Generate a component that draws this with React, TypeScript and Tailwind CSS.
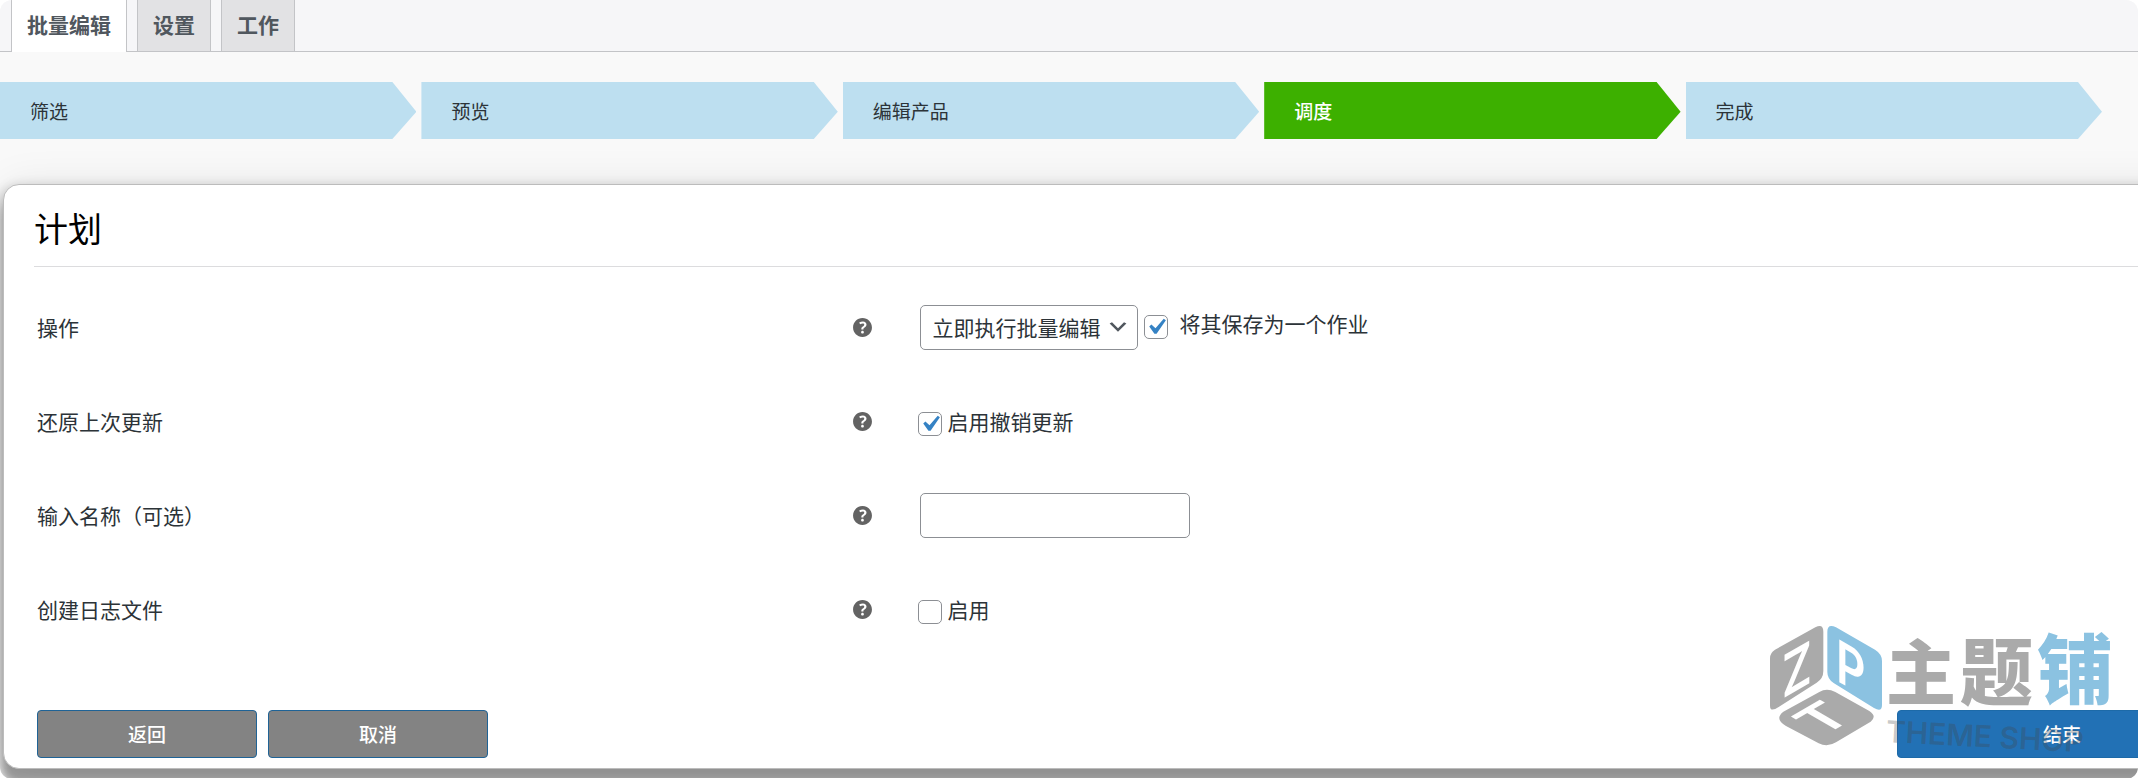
import { useId, useState } from "react";
import type { ReactNode } from "react";

const tabs = ["批量编辑", "设置", "工作"];
const steps = ["筛选", "预览", "编辑产品", "调度", "完成"];
const currentStep = 3;

function HelpIcon() {
  return (
    <svg viewBox="0 0 20 20" className="size-[27px] fill-[#636363]" aria-hidden="true">
      <path d="M17 10c0-3.87-3.14-7-7-7-3.87 0-7 3.13-7 7s3.13 7 7 7c3.86 0 7-3.13 7-7zm-6.3 1.48H9.14v-.43c0-.38.08-.7.24-.98s.46-.57.88-.89c.41-.29.68-.53.81-.71.14-.18.2-.39.2-.62 0-.25-.09-.44-.28-.58-.19-.13-.45-.19-.79-.19-.58 0-1.25.19-2 .57l-.64-1.28c.87-.49 1.8-.74 2.77-.74.81 0 1.45.2 1.92.58.48.39.71.91.71 1.55 0 .43-.09.8-.29 1.11-.19.32-.57.67-1.11 1.06-.38.28-.61.49-.71.63-.1.15-.15.34-.15.57v.35zm-1.47 2.74c-.18-.17-.27-.42-.27-.73 0-.33.08-.58.26-.75s.43-.25.77-.25c.32 0 .57.09.75.26s.27.42.27.74c0 .3-.09.55-.27.72-.18.18-.43.27-.75.27-.33 0-.58-.09-.76-.26z" />
    </svg>
  );
}

function Checkbox({ id, initial }: { id: string; initial: boolean }) {
  const [checked, setChecked] = useState(initial);
  return (
    <span className="grid size-6 shrink-0 place-items-center">
      <input
        id={id}
        type="checkbox"
        checked={checked}
        onChange={(e) => setChecked(e.target.checked)}
        className="size-6 appearance-none rounded-[5px] border border-[#8c8f94] bg-white [grid-area:1/1]"
      />
      {checked && (
        <svg viewBox="0 0 20 20" className="pointer-events-none -m-1 size-8 fill-[#3582c4] [grid-area:1/1]" aria-hidden="true">
          <path d="M14.83 4.89l1.34.94-5.81 8.38H9.02L5.78 9.67l1.34-1.25 2.57 2.4z" />
        </svg>
      )}
    </span>
  );
}

function CheckField({ id, initial, text }: { id: string; initial: boolean; text: string }) {
  return (
    <div className="flex items-center gap-1.5">
      <div className="pt-1.5">
        <Checkbox id={id} initial={initial} />
      </div>
      <label htmlFor={id}>{text}</label>
    </div>
  );
}

function Row({ label, htmlFor, children }: { label: string; htmlFor: string; children: ReactNode }) {
  return (
    <div className="grid h-[94px] grid-cols-[812fr_69px_1310fr] items-center">
      <label htmlFor={htmlFor}>{label}</label>
      <HelpIcon />
      <div className="flex items-center">{children}</div>
    </div>
  );
}

function Watermark() {
  return (
    <div className="pointer-events-none absolute right-[26px] bottom-[18px] flex w-[352px]" aria-hidden="true">
      <svg viewBox="0 0 420 450" className="h-[150px] w-[140px] shrink-0">
        <path fill="#aaaaaa" d="M30 142Q30 125 45 116L166 49Q190 37 190 62V180Q190 203 170 215L56 288Q30 305 30 284Z" />
        <path fill="#8bc2e1" d="M202 62Q202 37 228 49L345 116Q366 129 366 150V282Q366 305 342 291L222 217Q202 205 202 183Z" />
        <path fill="#aaaaaa" d="M178 243Q200 229 226 243L328 300Q352 316 332 332L228 394Q202 410 176 397L78 345Q42 324 70 302Z" />
        <g fill="#ffffff" fontFamily="Inter, sans-serif" fontSize="176" fontWeight="600">
          <text transform="matrix(.78 -.45 0 1 66 264)">Z</text>
          <text transform="matrix(.78 .45 0 1 228 208)">P</text>
          <text transform="matrix(.85 -.5 .78 .45 187 378)">T</text>
        </g>
      </svg>
      <div className="-ml-[14px] flex flex-col pt-1.5">
        <div className="flex gap-1 font-black">
          <span className="text-[70px] leading-[104px] text-[#aaaaaa]">主</span>
          <span className="text-[73px] leading-[100px] text-[#aaaaaa]">题</span>
          <span className="text-[76px] leading-[96px] text-[#8bc2e1]">铺</span>
        </div>
        <span className="-mt-1.5 origin-left rotate-3 font-[Inter,sans-serif] text-[30px] leading-8 font-semibold whitespace-nowrap text-[#444444]/30">
          THEME SHOP
        </span>
      </div>
    </div>
  );
}

export default function App() {
  const id = useId();
  return (
    <div className="relative overflow-hidden rounded-xl bg-[#f9f9f9] pb-[10px] font-['Noto_Sans_CJK_SC',sans-serif] text-[21px] leading-7 text-[#2c3338]">
      <nav className="flex h-[52px] gap-[10px] border-b border-[#c3c4c7] bg-[#f6f6f8] pl-[11px]">
        {tabs.map((tab, i) => (
          <a
            key={tab}
            href="#"
            className={
              i === 0
                ? "-mb-px border-x border-[#c3c4c7] bg-white px-[15px] pt-[10px] font-bold text-[#50575e]"
                : "border-x border-[#c3c4c7] bg-[#e2e2e4] px-[15px] pt-[10px] font-bold text-[#50575e]"
            }
          >
            {tab}
          </a>
        ))}
      </nav>

      <ol className="mt-[30px] mr-9 grid grid-cols-5 gap-[5px] text-[19px]">
        {steps.map((step, i) => (
          <li
            key={step}
            className={
              i === currentStep
                ? "flex h-[57px] items-center bg-[#3db000] pl-[30px] font-medium text-white [clip-path:polygon(0_0,calc(100%-24px)_0,100%_52%,calc(100%-24px)_100%,0_100%)]"
                : "flex h-[57px] items-center bg-[#bddff0] pl-[30px] [clip-path:polygon(0_0,calc(100%-24px)_0,100%_52%,calc(100%-24px)_100%,0_100%)]"
            }
          >
            {step}
          </li>
        ))}
      </ol>

      <form
        onSubmit={(e) => e.preventDefault()}
        className="mt-[45px] -mr-[120px] ml-[3px] rounded-2xl border border-[#bcbcbc] bg-white pr-[30px] pb-[10px] pl-[30px] shadow-[0_8px_12px_6px_rgba(0,0,0,0.2),0_16px_8px_rgba(0,0,0,0.24),0_0_40px_rgba(0,0,0,0.08)]"
      >
        <h1 className="flex h-[82px] items-center border-b border-[#dcdcde] pt-1 text-[34px] text-black">计划</h1>

        <div className="mt-[13px] pl-[3px]">
          <Row label="操作" htmlFor={`${id}action`}>
            <div className="mx-0.5 grid items-center">
              <select
                id={`${id}action`}
                className="h-[45px] appearance-none rounded-[5px] border border-[#8c8f94] bg-white pr-9 pl-3 [grid-area:1/1]"
              >
                <option>立即执行批量编辑</option>
              </select>
              <svg viewBox="0 0 20 20" className="pointer-events-none mr-2 size-6 justify-self-end fill-[#50575e] [grid-area:1/1]" aria-hidden="true">
                <path d="M5 6l5 5 5-5 2 1-7 7-7-7 2-1z" />
              </svg>
            </div>
            <div className="ml-1 flex items-center gap-3">
              <Checkbox id={`${id}job`} initial />
              <label htmlFor={`${id}job`} className="pb-2">将其保存为一个作业</label>
            </div>
          </Row>
          <Row label="还原上次更新" htmlFor={`${id}undo`}>
            <CheckField id={`${id}undo`} initial text="启用撤销更新" />
          </Row>
          <Row label="输入名称（可选）" htmlFor={`${id}name`}>
            <input
              id={`${id}name`}
              type="text"
              className="mx-0.5 h-[45px] w-[270px] rounded-[5px] border border-[#8c8f94] bg-white px-3"
            />
          </Row>
          <Row label="创建日志文件" htmlFor={`${id}log`}>
            <CheckField id={`${id}log`} initial={false} text="启用" />
          </Row>

          <div className="mt-[54px] flex gap-[11px] text-[19px] font-medium text-white">
            <button type="button" className="h-12 w-[220px] rounded-[4px] border border-[#1f6396] bg-[#838383]">返回</button>
            <button type="button" className="h-12 w-[220px] rounded-[4px] border border-[#1f6396] bg-[#838383]">取消</button>
            <button type="submit" className="ml-auto h-12 w-[330px] rounded-[4px] border border-[#1d6aa8] bg-[#2271b5]">结束</button>
          </div>
        </div>
      </form>

      <Watermark />
    </div>
  );
}
